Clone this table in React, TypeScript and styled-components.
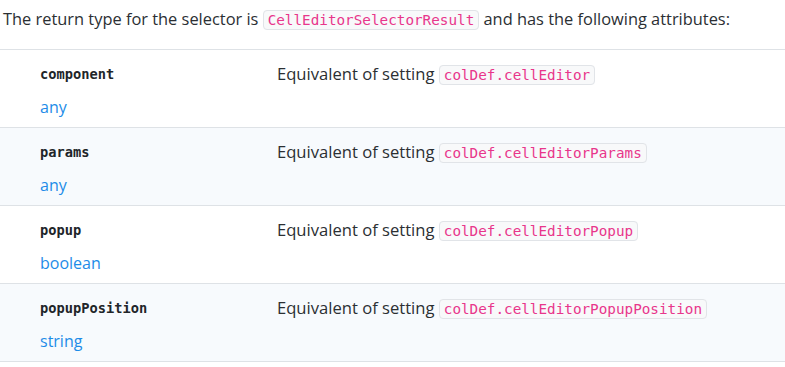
import React from 'react';
import styled, { createGlobalStyle } from 'styled-components';

const GlobalStyle = createGlobalStyle`
    body {
        margin: 0;
        background: #fff;
        font-family: "Open Sans", "Noto Sans", sans-serif;
        color: #212529;
    }
`;

const attributes = [
    { name: 'component', type: 'any', setting: 'colDef.cellEditor' },
    { name: 'params', type: 'any', setting: 'colDef.cellEditorParams' },
    { name: 'popup', type: 'boolean', setting: 'colDef.cellEditorPopup' },
    { name: 'popupPosition', type: 'string', setting: 'colDef.cellEditorPopupPosition' },
];

const App = () => {
    return (
        <StyledPage>
            <GlobalStyle />
            <StyledIntro>
                The return type for the selector is <Code>CellEditorSelectorResult</Code> and has the following attributes:
            </StyledIntro>
            <StyledTable>
                {attributes.map((a, idx) => (
                    <StyledRow key={a.name} $shaded={idx % 2 === 1}>
                        <StyledNameCell>
                            <span className="name">{a.name}</span>
                            <span className="type">{a.type}</span>
                        </StyledNameCell>
                        <StyledDescription>
                            Equivalent of setting <Code>{a.setting}</Code>
                        </StyledDescription>
                    </StyledRow>
                ))}
            </StyledTable>
        </StyledPage>
    );
};

const StyledPage = styled.main`
    width: 785px;
    padding-top: 7px;
`;

const StyledIntro = styled.p`
    margin: 0 0 17px 3px;
    font-size: 16.4px;
    line-height: 24px;
    color: #2b2f33;
    white-space: nowrap;
`;

const Code = styled.code`
    font-family: "DejaVu Sans Mono", "Liberation Mono", monospace;
    font-size: 14.3px;
    color: #e8368b;
    background: #f8f9fa;
    border: 1px solid #e1e4e8;
    border-radius: 4px;
    padding: 1px 4px;
`;

const StyledTable = styled.section`
    display: flex;
    flex-direction: column;
    border-bottom: 1px solid #dee2e6;
`;

const StyledRow = styled.div<{ $shaded: boolean }>`
    display: grid;
    grid-template-columns: 237px 1fr;
    height: 77px;
    padding-left: 40px;
    border-top: 1px solid #dee2e6;
    background: ${p => (p.$shaded ? '#f7fafd' : '#fff')};
`;

const StyledNameCell = styled.div`
    display: flex;
    flex-direction: column;
    padding-top: 14px;
    .name {
        font-family: "DejaVu Sans Mono", "Liberation Mono", monospace;
        font-weight: bold;
        font-size: 13.7px;
        line-height: 20px;
        color: #212529;
    }
    .type {
        margin-top: 12px;
        font-size: 16px;
        line-height: 22px;
        color: #1d8ce8;
    }
`;

const StyledDescription = styled.div`
    padding-top: 12px;
    font-size: 16.6px;
    line-height: 24px;
    color: #2b2f33;
    white-space: nowrap;
`;

export default App;
